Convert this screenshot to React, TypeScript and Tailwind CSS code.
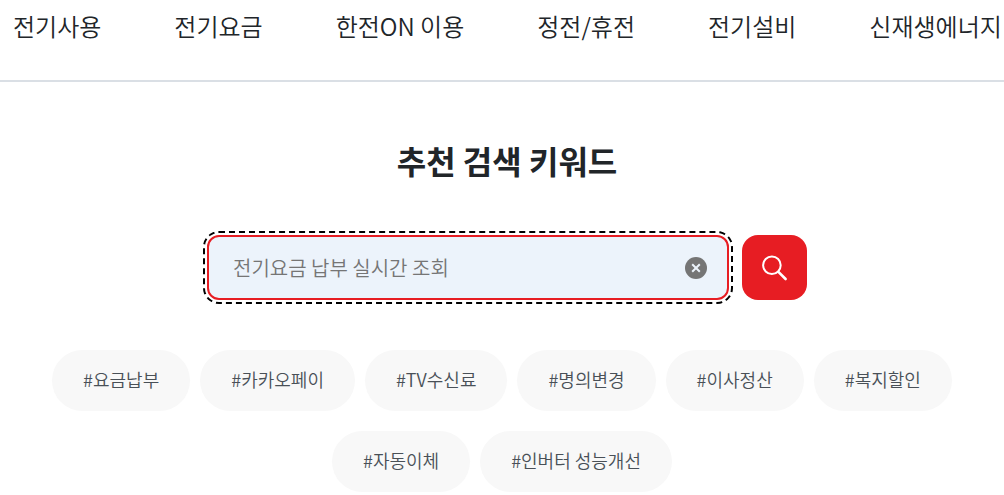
import React, { useState } from 'react';

const MENU = ['전기사용', '전기요금', '한전ON 이용', '정전/휴전', '전기설비', '신재생에너지'];

const KEYWORDS = [
    '요금납부',
    '카카오페이',
    'TV수신료',
    '명의변경',
    '이사정산',
    '복지할인',
    '자동이체',
    '인버터 성능개선',
];

const ClearIcon = () => (
    <svg viewBox="0 0 22 22" className="h-[22px] w-[22px]" aria-hidden="true">
        <circle cx="11" cy="11" r="11" fill="#757575" />
        <path d="M7.2 7.2l7.6 7.6M14.8 7.2l-7.6 7.6" stroke="#ecf3fb" strokeWidth="2" />
    </svg>
);

const SearchIcon = () => (
    <svg viewBox="0 0 26 26" className="h-[26px] w-[26px]" fill="none" stroke="#fff" aria-hidden="true">
        <circle cx="9.9" cy="10.2" r="8.8" strokeWidth="2" />
        <path d="M16.4 16.8l7.2 7.2" strokeWidth="2.6" strokeLinecap="round" />
    </svg>
);

const MainMenu: React.FC = () => (
    <header className="overflow-hidden border-b-2 border-[#dadfe5]">
        <nav className="px-[13px] pt-2 pb-9" aria-label="주요 메뉴">
            <ul className="flex gap-[73px] text-2xl leading-9 font-[350] whitespace-nowrap text-[#212529]">
                {MENU.map(item => (
                    <li key={item}>
                        <a href="#menu">{item}</a>
                    </li>
                ))}
            </ul>
        </nav>
    </header>
);

const SearchForm: React.FC = () => {
    const [query, setQuery] = useState('');

    return (
        <form
            role="search"
            onSubmit={e => e.preventDefault()}
            className="mx-auto mt-[51px] flex max-w-[600px] gap-[13px]"
        >
            <div className="flex h-[65px] min-w-0 flex-1 items-center rounded-xl border-2 border-[#e71d23] bg-[#ecf3fb] pr-5 pl-6 outline-2 outline-offset-2 outline-black outline-dashed">
                <input
                    type="text"
                    value={query}
                    onChange={e => setQuery(e.target.value)}
                    aria-label="검색어"
                    placeholder="전기요금 납부 실시간 조회"
                    className="h-full min-w-0 flex-1 text-xl font-[350] outline-none placeholder:text-[#757575]"
                />
                <button type="button" aria-label="검색어 지우기" onClick={() => setQuery('')}>
                    <ClearIcon />
                </button>
            </div>
            <button
                type="submit"
                aria-label="검색"
                className="flex h-[65px] w-[65px] items-center justify-center rounded-2xl bg-[#e71d23]"
            >
                <SearchIcon />
            </button>
        </form>
    );
};

export default function App() {
    return (
        <div className="min-h-screen bg-white font-['Noto_Sans_CJK_KR',sans-serif]">
            <MainMenu />
            <main className="pt-[54px] pl-[10px]">
                <h1 className="text-center text-[32px] leading-[48px] font-bold text-[#212529]">추천 검색 키워드</h1>
                <SearchForm />
                <ul className="mx-auto mt-[50px] flex max-w-[960px] flex-wrap justify-center gap-y-5">
                    {KEYWORDS.map(word => (
                        <li key={word} className="mr-[10px]">
                            <a
                                href="#search"
                                className="flex h-[61px] items-center rounded-full bg-[#f8f8f8] px-[31px] pb-[3px] text-lg font-[350] text-[#495057]"
                            >
                                #{word}
                            </a>
                        </li>
                    ))}
                </ul>
            </main>
        </div>
    );
}
